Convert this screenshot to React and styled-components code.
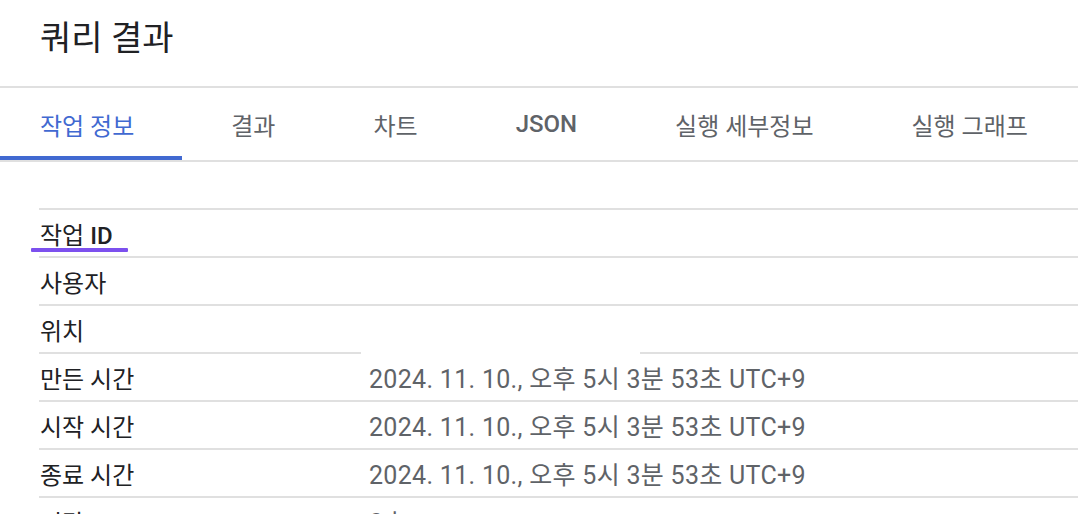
import React from "react";
import styled, { createGlobalStyle } from "styled-components";

const Global = createGlobalStyle`
  html, body { margin: 0; padding: 0; background: #fff; }
  body { font-family: Roboto, "Noto Sans CJK KR", sans-serif; overflow: hidden; }
`;

const Page = styled.div`
  width: 1078px;
  height: 514px;
  overflow: hidden;
  background: #fff;
`;

const Header = styled.header`
  height: 88px;
  box-sizing: border-box;
  padding: 16px 0 0 40px;
  border-bottom: 2px solid #e0e0e0;
`;

const Title = styled.h1`
  margin: 0;
  font-size: 34px;
  line-height: 44px;
  font-weight: 400;
  color: #202124;
`;

const TabBar = styled.nav`
  display: flex;
  border-bottom: 2px solid #e0e0e0;
`;

const Tab = styled.div`
  height: 72px;
  box-sizing: border-box;
  display: flex;
  align-items: center;
  padding: ${(p) => (p.$first ? "4px 48px 0 40px" : "4px 49px 0")};
  font-size: 24px;
  font-weight: 400;
  color: ${(p) => (p.$active ? "#4169d1" : "#5f6368")};
  border-bottom: 4px solid ${(p) => (p.$active ? "#4169d1" : "transparent")};
  white-space: nowrap;
`;

const Latin = styled.span`
  font-weight: 500;
`;

const Content = styled.section`
  padding: 46px 0 0 39px;
`;

const Table = styled.div`
  display: grid;
  grid-template-columns: 322px 1fr;
  border-top: 2px solid #e0e0e0;
`;

const Label = styled.div`
  position: relative;
  height: 46px;
  display: flex;
  align-items: center;
  padding-left: 1px;
  font-size: 24px;
  font-weight: 400;
  color: #202124;
  border-bottom: 2px solid #e0e0e0;
  white-space: nowrap;
`;

const LabelText = styled.span`
  white-space: pre;
`;

const Value = styled.div`
  height: 46px;
  display: flex;
  align-items: center;
  padding-left: 8px;
  font-size: 25px;
  letter-spacing: 0.3px;
  font-weight: 400;
  color: #5f6368;
  white-space: nowrap;
  ${(p) =>
    p.$lineFrom
      ? `background: linear-gradient(#e0e0e0, #e0e0e0) no-repeat right bottom / calc(100% - ${p.$lineFrom}px) 2px;
         padding-bottom: 2px;`
      : `border-bottom: 2px solid #e0e0e0;`}
`;

const Mark = styled.span`
  position: absolute;
  left: -8px;
  top: 38px;
  width: 97px;
  height: 4px;
  background: #7c50ee;
  border-radius: 1px;
`;

const tabs = [
  { key: "info", content: "작업 정보" },
  { key: "result", content: "결과" },
  { key: "chart", content: "차트" },
  { key: "json", content: <Latin>JSON</Latin> },
  { key: "detail", content: "실행 세부정보" },
  { key: "graph", content: "실행 그래프" },
];

const time = "2024. 11. 10., 오후 5시 3분 53초 UTC+9";

const rows = [
  { key: "id", label: <>작업 <Latin>ID</Latin></>, value: "", mark: true },
  { key: "user", label: "사용자", value: "" },
  { key: "loc", label: "위치", value: "", lineFrom: 279 },
  { key: "created", label: "만든 시간", value: time },
  { key: "start", label: "시작 시간", value: time },
  { key: "end", label: "종료 시간", value: time },
  { key: "dur", label: "기간", value: "0초" },
];

export default function App() {
  return (
    <Page>
      <Global />
      <Header>
        <Title>쿼리 결과</Title>
      </Header>
      <TabBar>
        {tabs.map((t, i) => (
          <Tab key={t.key} $first={i === 0} $active={i === 0}>
            {t.content}
          </Tab>
        ))}
      </TabBar>
      <Content>
        <Table>
          {rows.map((r) => (
            <React.Fragment key={r.key}>
              <Label>
                <LabelText>{r.label}</LabelText>
                {r.mark && <Mark />}
              </Label>
              <Value $lineFrom={r.lineFrom}>{r.value}</Value>
            </React.Fragment>
          ))}
        </Table>
      </Content>
    </Page>
  );
}
